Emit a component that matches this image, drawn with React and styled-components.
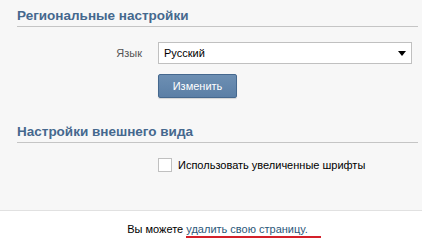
import React, { useState } from 'react';
import styled, { createGlobalStyle } from 'styled-components';

const GlobalStyle = createGlobalStyle`
  html, body {
    margin: 0;
    padding: 0;
    background: #ffffff;
  }
  body {
    font-family: "Liberation Sans", Arial, sans-serif;
    font-size: 11px;
    color: #000000;
  }
`;

const Page = styled.div`
  width: 422px;
  height: 244px;
  overflow: hidden;
`;

const Settings = styled.div`
  background: #f7f7f7;
  border-bottom: 1px solid #e1e1e1;
  padding: 0 4px 38px 17px;
`;

const SectionTitle = styled.h2`
  margin: ${p => p.$first ? '0' : '18px'} 0 0;
  padding: 8px 0 2px;
  font-size: 13.5px;
  line-height: 16px;
  font-weight: bold;
  color: #45688e;
  border-bottom: 1px solid #c5c5c5;
`;

const Row = styled.div`
  display: flex;
  align-items: center;
  margin-top: ${p => p.$top}px;
`;

const Label = styled.label`
  width: 125px;
  padding-right: 16px;
  text-align: right;
  color: #555555;
`;

const Select = styled.div`
  position: relative;
  width: 247px;
  height: 20px;
  border: 1px solid #c0c0c0;
  background: #ffffff;
  display: flex;
  align-items: center;
  padding-left: 5px;
`;

const Arrow = styled.span`
  position: absolute;
  right: 5px;
  top: 8px;
  width: 0;
  height: 0;
  border-left: 4px solid transparent;
  border-right: 4px solid transparent;
  border-top: 5px solid #000000;
`;

const Button = styled.button`
  margin-left: 141px;
  width: 79px;
  height: 24px;
  border: 1px solid #45688e;
  border-radius: 2px;
  background: linear-gradient(#6d8fb3, #5b7fa6);
  color: #ffffff;
  font-family: inherit;
  font-size: 11px;
  padding: 0;
  box-shadow: 0 1px 1px rgba(0, 0, 0, 0.15);
`;

const Check = styled.span`
  margin-left: 141px;
  width: 12px;
  height: 12px;
  border: 1px solid #c0c0c0;
  background: #ffffff;
  margin-right: 6px;
`;

const Footer = styled.div`
  text-align: center;
  padding-top: 11px;
  padding-left: 26px;
  line-height: 14px;
`;

const DeleteLink = styled.a`
  color: #2b587a;
  text-decoration: none;
  border-bottom: 2px solid #d4202a;
  padding: 0 13px 1px 0;
`;

export default function App() {
  const [big, setBig] = useState(false);

  return (
    <Page>
      <GlobalStyle />
      <Settings>
        <SectionTitle $first>Региональные настройки</SectionTitle>
        <Row $top={15}>
          <Label>Язык</Label>
          <Select>
            Русский
            <Arrow />
          </Select>
        </Row>
        <Row $top={10}>
          <Button>Изменить</Button>
        </Row>
        <SectionTitle>Настройки внешнего вида</SectionTitle>
        <Row $top={15} onClick={() => setBig(!big)}>
          <Check />
          Использовать увеличенные шрифты
        </Row>
      </Settings>
      <Footer>
        Вы можете <DeleteLink href="#">удалить свою страницу.</DeleteLink>
      </Footer>
    </Page>
  );
}
